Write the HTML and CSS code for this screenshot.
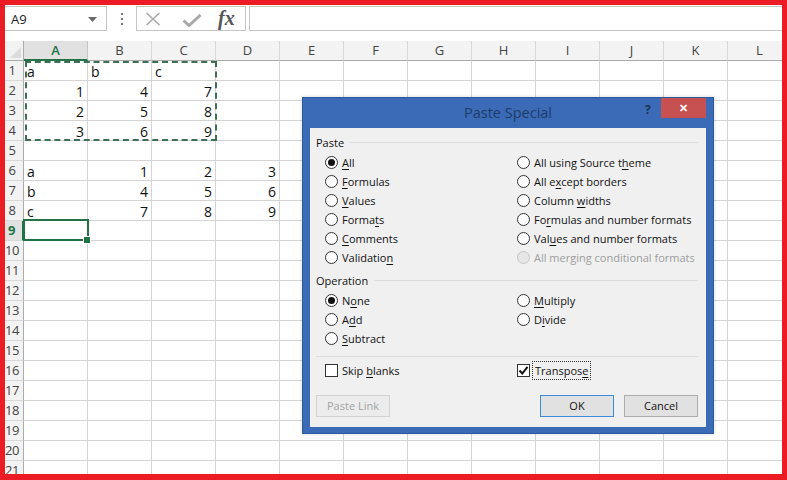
FILE: index.html
```html
<!DOCTYPE html>
<html>
<head>
<meta charset="utf-8">
<link rel="stylesheet" href="styles.css">
</head>
<body>
<div class="app">
  <div class="fbar">
    <div class="namebox"><span class="nb-text">A9</span><svg class="nb-arrow" width="9" height="5" viewBox="0 0 9 5"><path d="M0 0H9L4.5 5Z" fill="#6a6a6a"/></svg></div>
    <div class="grip"><svg width="4" height="14" viewBox="0 0 4 14"><rect x="1" y="1" width="2" height="2" fill="#7a7a7a"/><rect x="1" y="6" width="2" height="2" fill="#7a7a7a"/><rect x="1" y="11" width="2" height="2" fill="#7a7a7a"/></svg></div>
    <div class="fxbox">
      <svg class="ico-x" width="16" height="14" viewBox="0 0 16 14"><path d="M1.5 1L14.5 13M14.5 1L1.5 13" stroke="#a8a8a8" stroke-width="1.6" fill="none"/></svg>
      <svg class="ico-ok" width="20" height="13" viewBox="0 0 20 13"><path d="M1.5 6.5L7 11.5L18.5 1" stroke="#a8a8a8" stroke-width="3" fill="none"/></svg>
      <span class="fx">fx</span>
    </div>
    <div class="finput"></div>
  </div>

  <div class="sheet">
    <div class="row hdr">
      <div class="corner"><span class="tri"></span></div>
      <div class="ch on">A</div><div class="ch">B</div><div class="ch">C</div><div class="ch">D</div><div class="ch">E</div><div class="ch">F</div><div class="ch">G</div><div class="ch">H</div><div class="ch">I</div><div class="ch">J</div><div class="ch">K</div><div class="ch">L</div>
    </div>
    <div class="row"><div class="rh">1</div><div class="c">a</div><div class="c">b</div><div class="c">c</div><div class="c"></div><div class="c"></div><div class="c"></div><div class="c"></div><div class="c"></div><div class="c"></div><div class="c"></div><div class="c"></div><div class="c"></div></div>
    <div class="row"><div class="rh">2</div><div class="c n">1</div><div class="c n">4</div><div class="c n">7</div><div class="c"></div><div class="c"></div><div class="c"></div><div class="c"></div><div class="c"></div><div class="c"></div><div class="c"></div><div class="c"></div><div class="c"></div></div>
    <div class="row"><div class="rh">3</div><div class="c n">2</div><div class="c n">5</div><div class="c n">8</div><div class="c"></div><div class="c"></div><div class="c"></div><div class="c"></div><div class="c"></div><div class="c"></div><div class="c"></div><div class="c"></div><div class="c"></div></div>
    <div class="row"><div class="rh">4</div><div class="c n">3</div><div class="c n">6</div><div class="c n">9</div><div class="c"></div><div class="c"></div><div class="c"></div><div class="c"></div><div class="c"></div><div class="c"></div><div class="c"></div><div class="c"></div><div class="c"></div></div>
    <div class="row"><div class="rh">5</div><div class="c"></div><div class="c"></div><div class="c"></div><div class="c"></div><div class="c"></div><div class="c"></div><div class="c"></div><div class="c"></div><div class="c"></div><div class="c"></div><div class="c"></div><div class="c"></div></div>
    <div class="row"><div class="rh">6</div><div class="c">a</div><div class="c n">1</div><div class="c n">2</div><div class="c n">3</div><div class="c"></div><div class="c"></div><div class="c"></div><div class="c"></div><div class="c"></div><div class="c"></div><div class="c"></div><div class="c"></div></div>
    <div class="row"><div class="rh">7</div><div class="c">b</div><div class="c n">4</div><div class="c n">5</div><div class="c n">6</div><div class="c"></div><div class="c"></div><div class="c"></div><div class="c"></div><div class="c"></div><div class="c"></div><div class="c"></div><div class="c"></div></div>
    <div class="row"><div class="rh">8</div><div class="c">c</div><div class="c n">7</div><div class="c n">8</div><div class="c n">9</div><div class="c"></div><div class="c"></div><div class="c"></div><div class="c"></div><div class="c"></div><div class="c"></div><div class="c"></div><div class="c"></div></div>
    <div class="row"><div class="rh on">9</div><div class="c sel"><span class="handle"></span></div><div class="c"></div><div class="c"></div><div class="c"></div><div class="c"></div><div class="c"></div><div class="c"></div><div class="c"></div><div class="c"></div><div class="c"></div><div class="c"></div><div class="c"></div></div>
    <div class="row"><div class="rh">10</div><div class="c"></div><div class="c"></div><div class="c"></div><div class="c"></div><div class="c"></div><div class="c"></div><div class="c"></div><div class="c"></div><div class="c"></div><div class="c"></div><div class="c"></div><div class="c"></div></div>
    <div class="row"><div class="rh">11</div><div class="c"></div><div class="c"></div><div class="c"></div><div class="c"></div><div class="c"></div><div class="c"></div><div class="c"></div><div class="c"></div><div class="c"></div><div class="c"></div><div class="c"></div><div class="c"></div></div>
    <div class="row"><div class="rh">12</div><div class="c"></div><div class="c"></div><div class="c"></div><div class="c"></div><div class="c"></div><div class="c"></div><div class="c"></div><div class="c"></div><div class="c"></div><div class="c"></div><div class="c"></div><div class="c"></div></div>
    <div class="row"><div class="rh">13</div><div class="c"></div><div class="c"></div><div class="c"></div><div class="c"></div><div class="c"></div><div class="c"></div><div class="c"></div><div class="c"></div><div class="c"></div><div class="c"></div><div class="c"></div><div class="c"></div></div>
    <div class="row"><div class="rh">14</div><div class="c"></div><div class="c"></div><div class="c"></div><div class="c"></div><div class="c"></div><div class="c"></div><div class="c"></div><div class="c"></div><div class="c"></div><div class="c"></div><div class="c"></div><div class="c"></div></div>
    <div class="row"><div class="rh">15</div><div class="c"></div><div class="c"></div><div class="c"></div><div class="c"></div><div class="c"></div><div class="c"></div><div class="c"></div><div class="c"></div><div class="c"></div><div class="c"></div><div class="c"></div><div class="c"></div></div>
    <div class="row"><div class="rh">16</div><div class="c"></div><div class="c"></div><div class="c"></div><div class="c"></div><div class="c"></div><div class="c"></div><div class="c"></div><div class="c"></div><div class="c"></div><div class="c"></div><div class="c"></div><div class="c"></div></div>
    <div class="row"><div class="rh">17</div><div class="c"></div><div class="c"></div><div class="c"></div><div class="c"></div><div class="c"></div><div class="c"></div><div class="c"></div><div class="c"></div><div class="c"></div><div class="c"></div><div class="c"></div><div class="c"></div></div>
    <div class="row"><div class="rh">18</div><div class="c"></div><div class="c"></div><div class="c"></div><div class="c"></div><div class="c"></div><div class="c"></div><div class="c"></div><div class="c"></div><div class="c"></div><div class="c"></div><div class="c"></div><div class="c"></div></div>
    <div class="row"><div class="rh">19</div><div class="c"></div><div class="c"></div><div class="c"></div><div class="c"></div><div class="c"></div><div class="c"></div><div class="c"></div><div class="c"></div><div class="c"></div><div class="c"></div><div class="c"></div><div class="c"></div></div>
    <div class="row"><div class="rh">20</div><div class="c"></div><div class="c"></div><div class="c"></div><div class="c"></div><div class="c"></div><div class="c"></div><div class="c"></div><div class="c"></div><div class="c"></div><div class="c"></div><div class="c"></div><div class="c"></div></div>
    <div class="row"><div class="rh">21</div><div class="c"></div><div class="c"></div><div class="c"></div><div class="c"></div><div class="c"></div><div class="c"></div><div class="c"></div><div class="c"></div><div class="c"></div><div class="c"></div><div class="c"></div><div class="c"></div></div>

    <div class="ants"></div>
  </div>

  <div class="dlg">
    <div class="dlg-title">
      <span class="dlg-name">Paste Special</span>
      <span class="help">?</span>
      <span class="close">✕</span>
    </div>
    <div class="dlg-body">
      <div class="group"><span class="glabel">Paste</span><span class="gline"></span></div>
      <div class="opts">
        <div class="opt"><span class="radio on"></span><span><u>A</u>ll</span></div>
        <div class="opt"><span class="radio"></span><span>All using Source t<u>h</u>eme</span></div>
        <div class="opt"><span class="radio"></span><span><u>F</u>ormulas</span></div>
        <div class="opt"><span class="radio"></span><span>All e<u>x</u>cept borders</span></div>
        <div class="opt"><span class="radio"></span><span><u>V</u>alues</span></div>
        <div class="opt"><span class="radio"></span><span>Column <u>w</u>idths</span></div>
        <div class="opt"><span class="radio"></span><span>Forma<u>t</u>s</span></div>
        <div class="opt"><span class="radio"></span><span>Fo<u>r</u>mulas and number formats</span></div>
        <div class="opt"><span class="radio"></span><span><u>C</u>omments</span></div>
        <div class="opt"><span class="radio"></span><span>Val<u>u</u>es and number formats</span></div>
        <div class="opt"><span class="radio"></span><span>Validatio<u>n</u></span></div>
        <div class="opt dis"><span class="radio"></span><span>All merging conditional formats</span></div>
      </div>
      <div class="group g2"><span class="glabel">Operation</span><span class="gline"></span></div>
      <div class="opts">
        <div class="opt"><span class="radio on"></span><span>N<u>o</u>ne</span></div>
        <div class="opt"><span class="radio"></span><span><u>M</u>ultiply</span></div>
        <div class="opt"><span class="radio"></span><span>A<u>d</u>d</span></div>
        <div class="opt"><span class="radio"></span><span>D<u>i</u>vide</span></div>
        <div class="opt"><span class="radio"></span><span><u>S</u>ubtract</span></div>
      </div>
      <div class="sep"></div>
      <div class="opts checks">
        <div class="opt"><span class="chk"></span><span>Skip <u>b</u>lanks</span></div>
        <div class="opt"><span class="chk on"><svg width="11" height="11" viewBox="0 0 11 11"><path d="M1.5 5.5L4.3 8.5L9.5 1.8" stroke="#111" stroke-width="2" fill="none"/></svg></span><span class="focus">Transpos<u>e</u></span></div>
      </div>
      <div class="btns">
        <div class="btn disabled">Paste Link</div>
        <div class="spacer"></div>
        <div class="btn def">OK</div>
        <div class="btn">Cancel</div>
      </div>
    </div>
  </div>
</div>
</body>
</html>
```

FILE: styles.css
```css
html, body {
  margin: 0;
  padding: 0;
}
body {
  background: #ec1c24;
  padding: 5px 5px 6px 5px;
  width: 777px;
  height: 469px;
  overflow: hidden;
  font-family: "Open Sans", "Noto Sans", sans-serif;
}
.app {
  position: relative;
  width: 777px;
  height: 469px;
  background: #ffffff;
  overflow: hidden;
}

/* formula bar */
.fbar {
  display: flex;
  align-items: flex-start;
  height: 36px;
  padding-top: 1px;
  box-sizing: border-box;
}
.namebox {
  width: 102px;
  height: 25px;
  box-sizing: border-box;
  border: 1px solid #c6c6c6;
  border-left: none;
  display: flex;
  align-items: center;
  justify-content: space-between;
  padding: 0 9px 0 6px;
  font-size: 13px;
  color: #222;
}
.nb-arrow { margin-top: 1px; }
.grip {
  width: 29px;
  height: 25px;
  display: flex;
  align-items: center;
  justify-content: center;
}
.fxbox {
  width: 110px;
  height: 25px;
  box-sizing: border-box;
  border: 1px solid #c6c6c6;
  display: flex;
  align-items: center;
  padding-left: 8px;
}
.ico-x { margin-top: 1px; }
.ico-ok { margin-left: 21px; margin-top: 3px; }
.fx {
  margin-left: 16px;
  font-family: "Liberation Serif", "DejaVu Serif", serif;
  font-style: italic;
  font-weight: 700;
  font-size: 20px;
  color: #555;
  line-height: 20px;
  margin-top: -2px;
}
.finput {
  flex: 1;
  margin-left: 3px;
  height: 25px;
  box-sizing: border-box;
  border: 1px solid #c6c6c6;
  border-right: none;
}

/* sheet */
.sheet {
  position: relative;
}
.row {
  display: flex;
  height: 20px;
}
.row > div {
  flex: none;
  box-sizing: border-box;
  height: 20px;
}
.corner {
  width: 19px;
  background: #f3f3f3;
  border-right: 1px solid #ababab;
  border-bottom: 1px solid #ababab;
  position: relative;
}
.tri {
  position: absolute;
  right: 2px;
  bottom: 2px;
  width: 0;
  height: 0;
  border-left: 11px solid transparent;
  border-bottom: 11px solid #dcdcdc;
}
.ch {
  width: 64px;
  background: #f3f3f3;
  border-right: 1px solid #d8d8d8;
  border-bottom: 1px solid #ababab;
  text-align: center;
  font-size: 13px;
  line-height: 19px;
  color: #444;
}
.ch.on {
  background: #e1e1e1;
  color: #217346;
  font-weight: 600;
  border-bottom: 2px solid #217346;
  border-right-color: #c6c6c6;
}
.rh {
  width: 19px;
  background: #f3f3f3;
  border-right: 1px solid #ababab;
  border-bottom: 1px solid #d8d8d8;
  font-size: 13px;
  line-height: 19px;
  color: #444;
  text-align: center;
  padding-right: 4px;
  letter-spacing: -0.5px;
  white-space: nowrap;
}
.rh.on {
  background: #e1e1e1;
  color: #217346;
  font-weight: 700;
  border-right: 2px solid #217346;
}
.c {
  width: 64px;
  border-right: 1px solid #d4d4d4;
  border-bottom: 1px solid #d4d4d4;
  font-size: 14px;
  line-height: 21px;
  color: #111;
  padding: 0 3px 0 3px;
  overflow: hidden;
  white-space: nowrap;
}
.c.n { text-align: right; }
.c.sel { position: relative; overflow: visible; }
.c.sel::after {
  content: "";
  position: absolute;
  left: -1px;
  top: -2px;
  right: -2px;
  bottom: -1px;
  border: 2px solid #217346;
}
.handle {
  position: absolute;
  right: -4px;
  bottom: -4px;
  width: 6px;
  height: 6px;
  background: #217346;
  border: 1px solid #fff;
  z-index: 2;
}
.ants {
  position: absolute;
  left: 20px;
  top: 20px;
  width: 192px;
  height: 80px;
  box-sizing: border-box;
  border: 2px dashed #3f6e57;
}

/* dialog */
.dlg {
  position: absolute;
  left: 297px;
  top: 92px;
  width: 412px;
  height: 337px;
  box-sizing: border-box;
  background: #3b6bb6;
  border: 1px solid #2d5a9f;
  padding: 0 7px 6px 7px;
  display: flex;
  flex-direction: column;
  box-shadow: 0 0 4px rgba(0,0,0,0.15);
}
.dlg-title {
  position: relative;
  height: 30px;
  flex: none;
  text-align: center;
}
.dlg-name {
  font-size: 14.5px;
  line-height: 30px;
  color: #1d3b6a;
}
.help {
  position: absolute;
  left: 335px;
  top: 3px;
  font-size: 12px;
  font-weight: 700;
  color: #1b3159;
}
.close {
  position: absolute;
  right: 0;
  top: 0;
  width: 45px;
  height: 20px;
  background: #c75050;
  color: #fff;
  font-size: 11px;
  font-weight: 700;
  line-height: 20px;
  text-align: center;
}
.dlg-body {
  flex: 1;
  background: #f0f0f0;
  padding: 5px 8px 0 6px;
  font-size: 11px;
  color: #111;
}
.group {
  display: flex;
  align-items: center;
  height: 18px;
}
.group.g2 { margin-top: 4px; }
.glabel { margin-right: 6px; }
.gline {
  flex: 1;
  height: 1px;
  background: #dcdcdc;
}
.opts {
  display: grid;
  grid-template-columns: 192px 1fr;
  grid-auto-rows: 19px;
  padding-left: 9px;
  margin-top: 2px;
}
.opt {
  display: flex;
  align-items: center;
  white-space: nowrap;
}
.opt u { text-decoration-thickness: 1px; text-underline-offset: 2px; }
.radio {
  width: 13px;
  height: 13px;
  box-sizing: border-box;
  border: 1px solid #333;
  border-radius: 50%;
  background: #fff;
  margin-right: 4px;
  display: flex;
  align-items: center;
  justify-content: center;
  flex: none;
}
.radio.on::after {
  content: "";
  width: 7px;
  height: 7px;
  border-radius: 50%;
  background: #111;
}
.opt.dis { color: #9d9d9d; }
.opt.dis .radio { border-color: #c4c4c4; background: #e6e6e6; }
.sep {
  height: 1px;
  background: #dcdcdc;
  margin-top: 8px;
  margin-right: 0;
}
.checks { margin-top: 4px; }
.chk {
  width: 13px;
  height: 13px;
  box-sizing: border-box;
  border: 1px solid #333;
  background: #fff;
  margin-right: 4px;
  flex: none;
  display: flex;
  align-items: center;
  justify-content: center;
}
.focus {
  outline: 1px dotted #333;
  outline-offset: 1px;
  padding: 0 1px;
}
.btns {
  display: flex;
  margin-top: 15px;
  gap: 10px;
  padding-right: 0;
}
.spacer { flex: 1; }
.btn {
  width: 74px;
  height: 22px;
  box-sizing: border-box;
  border: 1px solid #adadad;
  background: #e1e1e1;
  text-align: center;
  line-height: 20px;
  font-size: 11px;
}
.btn.def { border-color: #3c8ad8; }
.btn.disabled {
  color: #a3a3a3;
  border-color: #d2d2d2;
  background: #ececec;
}
```
